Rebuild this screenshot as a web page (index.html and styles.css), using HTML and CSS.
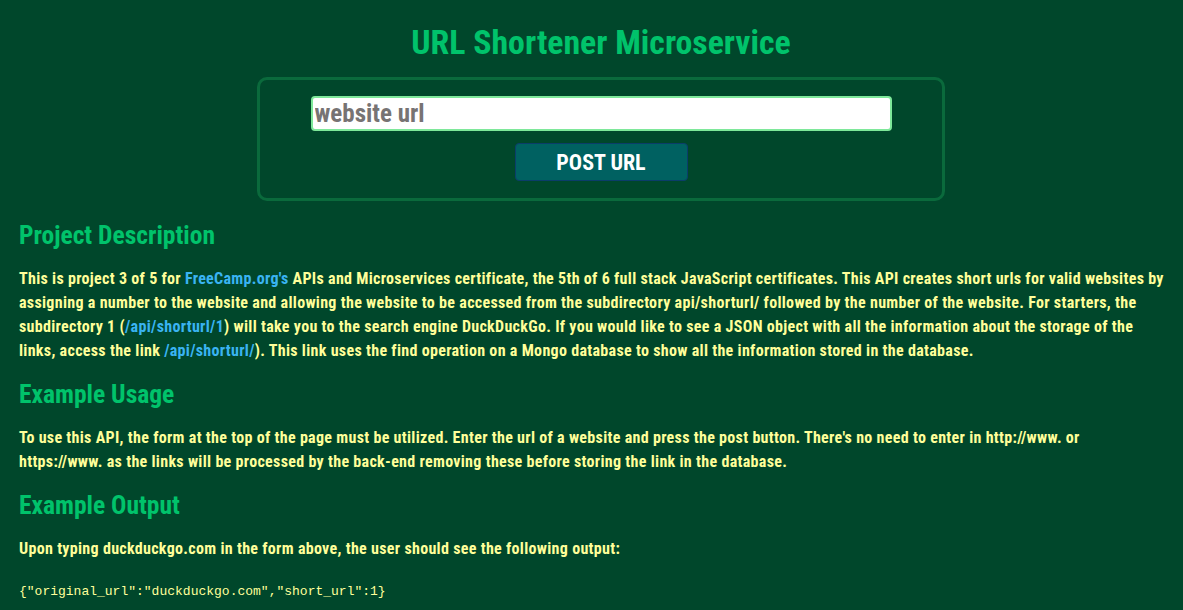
FILE: index.html
```html
<!DOCTYPE html>
<html>
<head>
<meta charset="utf-8">
<link rel="stylesheet" href="styles.css">
</head>
<body>
<header class="top">
  <h1 class="title">URL Shortener Microservice</h1>
  <form class="form-box">
    <input class="url-input" type="text" placeholder="website url">
    <button class="post-btn" type="button">POST URL</button>
  </form>
</header>
<main class="content">
  <h2 class="section-title">Project Description</h2>
  <p class="text">This is project 3 of 5 for <a class="link" href="#">FreeCamp.org's</a> APIs and Microservices certificate, the 5th of 6 full stack JavaScript certificates. This API creates short urls for valid websites by assigning a number to the website and allowing the website to be accessed from the subdirectory api/shorturl/ followed by the number of the website. For starters, the subdirectory 1 (<a class="link" href="#">/api/shorturl/1</a>) will take you to the search engine DuckDuckGo. If you would like to see a JSON object with all the information about the storage of the links, access the link <a class="link" href="#">/api/shorturl/</a>). This link uses the find operation on a Mongo database to show all the information stored in the database.</p>
  <h2 class="section-title">Example Usage</h2>
  <p class="text">To use this API, the form at the top of the page must be utilized. Enter the url of a website and press the post button. There's no need to enter in http://www. or https://www. as the links will be processed by the back-end removing these before storing the link in the database.</p>
  <h2 class="section-title">Example Output</h2>
  <p class="text">Upon typing duckduckgo.com in the form above, the user should see the following output:</p>
  <code class="code">{"original_url":"duckduckgo.com","short_url":1}</code>
</main>
</body>
</html>
```
FILE: styles.css
```css
html, body {
  margin: 0;
  padding: 0;
}
body {
  background: #00472b;
  font-family: "Roboto", "Liberation Sans", Arial, sans-serif;
  font-stretch: condensed;
  font-weight: bold;
  color: #ffff9a;
  height: 610px;
  overflow: hidden;
}
.top {
  display: flex;
  flex-direction: column;
  align-items: center;
  padding: 24px 0 0 19px;
}
.title {
  margin: 0;
  font-size: 33.8px;
  line-height: 38px;
  color: #00c36b;
}
.form-box {
  margin: 15px 0 0 0;
  width: 682px;
  height: 102px;
  border: 3px solid #0a6a3c;
  border-radius: 10px;
  display: flex;
  flex-direction: column;
  align-items: center;
  padding-top: 16px;
}
.url-input {
  width: 581px;
  height: 35px;
  box-sizing: border-box;
  border: 2px solid #7ee89a;
  border-radius: 4px;
  background: #fff;
  font-family: "Roboto", "Liberation Sans", Arial, sans-serif;
  font-stretch: condensed;
  font-weight: bold;
  font-size: 25px;
  padding: 0 2px;
  color: #333;
  outline: none;
}
.url-input::placeholder {
  color: #777373;
}
.post-btn {
  margin-top: 12px;
  width: 173px;
  height: 38px;
  background: #006161;
  border: 1px solid #0b3d6a;
  border-radius: 4px;
  color: #fff;
  font-family: "Roboto", "Liberation Sans", Arial, sans-serif;
  font-stretch: condensed;
  font-weight: bold;
  font-size: 22px;
}
.content {
  padding: 0 19px;
  display: flex;
  flex-direction: column;
  align-items: flex-start;
}
.section-title {
  margin: 16px 0 0 0;
  font-size: 25.5px;
  line-height: 30px;
  color: #00c36b;
}
.content > .section-title:first-child {
  margin-top: 19px;
}
.text {
  margin: 17px 0 0 0;
  font-size: 16px;
  letter-spacing: 0.31px;
  line-height: 24px;
}
.link {
  color: #3ab4f2;
  text-decoration: none;
}
.code {
  margin-top: 21px;
  font-family: "Liberation Mono", "Courier New", monospace;
  font-stretch: normal;
  font-weight: normal;
  font-size: 13px;
  line-height: 20px;
  color: #ffff9a;
}
```
